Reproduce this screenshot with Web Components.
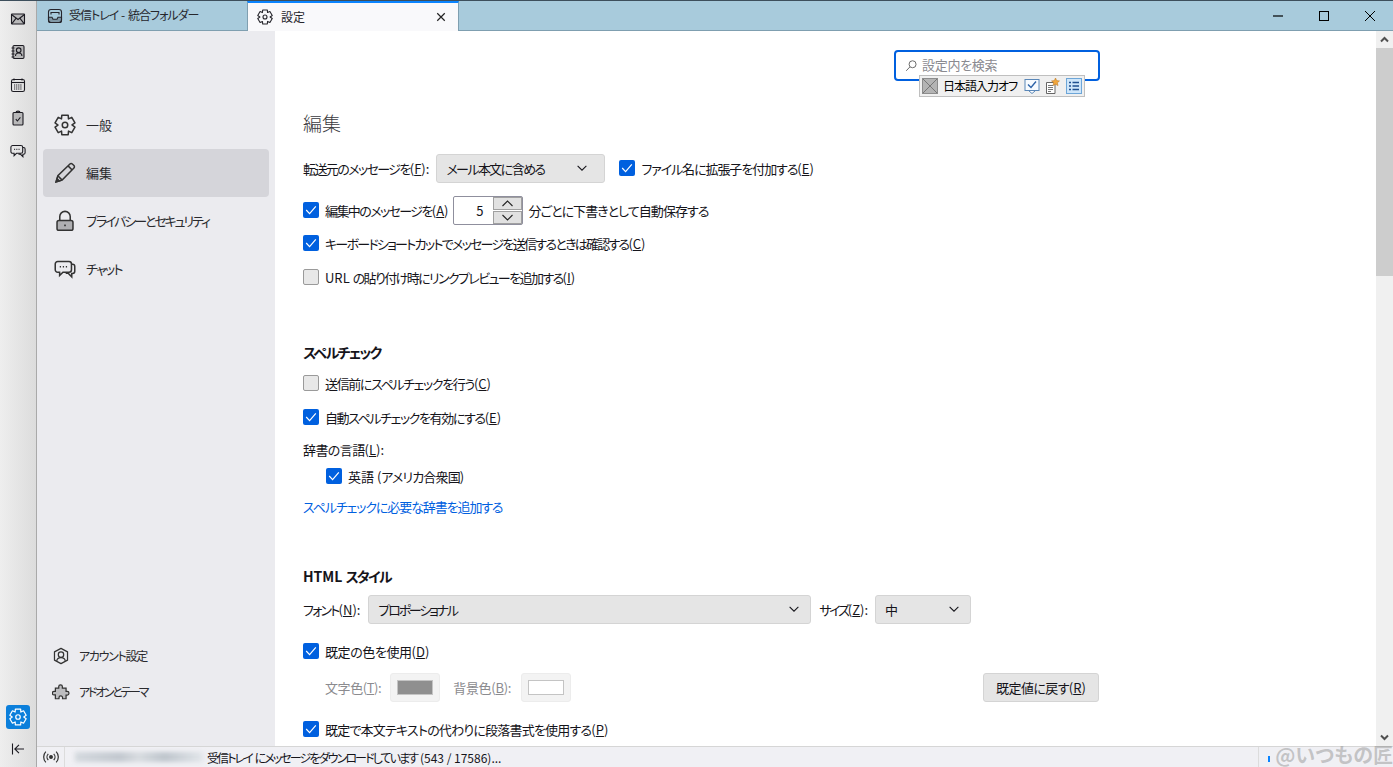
<!DOCTYPE html>
<html lang="ja">
<head>
<meta charset="utf-8">
<title>設定</title>
<style>
    html, body { margin: 0; height: 100%; overflow: hidden; }
    body {
        font-family: "Noto Sans CJK JP", "Noto Sans", sans-serif;
        font-size: 13px;
        color: #15141a;
        font-feature-settings: "palt";
    }
    .m3 { margin-top: 3px; } .m4 { margin-top: 4px; } .m5 { margin-top: 5px; } .m6 { margin-top: 6px; }
    .m12 { margin-top: 12px; } .m16 { margin-top: 16px; } .m26 { margin-top: 26px; }
    .m46 { margin-top: 46px; } .m48 { margin-top: 48px; } .m0 { margin-top: 0; }
    .indent { padding-left: 23px; }
    .push { margin-left: auto; }
    .dim { color: #8b8b8f; }
    /* latin parts keep normal spacing, only the kana is squeezed */
    .k { letter-spacing: 0; white-space: pre; }
    a { color: #0060df; text-decoration: none; }
</style>
</head>
<body>

<app-shell>
    <spaces-bar slot="spaces"></spaces-bar>

    <tab-bar slot="tabs">
        <tab-item icon="inbox" style="letter-spacing:-1px">受信トレイ<span class="k"> - </span>統合フォルダー</tab-item>
        <tab-item icon="gear" selected>設定</tab-item>
    </tab-bar>

    <pref-nav slot="nav">
        <nav-item icon="gear">一般</nav-item>
        <nav-item icon="pencil" selected>編集</nav-item>
        <nav-item icon="lock" style="letter-spacing:-2.1px">プライバシーとセキュリティ</nav-item>
        <nav-item icon="chat" style="letter-spacing:-1.7px">チャット</nav-item>
        <nav-item slot="footer" small icon="account" style="letter-spacing:-1.3px">アカウント設定</nav-item>
        <nav-item slot="footer" small icon="puzzle" style="letter-spacing:-2.3px">アドオンとテーマ</nav-item>
    </pref-nav>

    <pref-pane slot="pane">
        <search-box placeholder="設定内を検索"></search-box>

        <pref-title class="m26">編集</pref-title>

        <pref-row class="m16">
            <span style="letter-spacing:-1.6px">転送元のメッセージを<span class="k">(<u>F</u>):</span></span>
            <pref-select width="169" arrow-pad="15" style="margin-left:7px;letter-spacing:-1.6px">メール本文に含める</pref-select>
            <pref-check checked style="margin-left:14px;letter-spacing:-1.07px">ファイル名に拡張子を付加する<span class="k">(<u>E</u>)</span></pref-check>
        </pref-row>
        <pref-row class="m12">
            <pref-check checked style="letter-spacing:-1.6px">編集中のメッセージを<span class="k">(<u>A</u>)</span></pref-check>
            <number-box value="5" style="margin:0 5px 0 5px"></number-box>
            <span style="letter-spacing:-.95px">分ごとに下書きとして自動保存する</span>
        </pref-row>
        <pref-row class="m3"><pref-check checked style="letter-spacing:-1.73px">キーボードショートカットでメッセージを送信するときは確認する<span class="k">(<u>C</u>)</span></pref-check></pref-row>
        <pref-row class="m4"><pref-check style="letter-spacing:-1.6px"><span class="k">URL </span>の貼り付け時にリンクプレビューを追加する<span class="k">(<u>I</u>)</span></pref-check></pref-row>

        <pref-heading class="m48" style="letter-spacing:-1.7px">スペルチェック</pref-heading>
        <pref-row class="m4"><pref-check style="letter-spacing:-1.36px">送信前にスペルチェックを行う<span class="k">(<u>C</u>)</span></pref-check></pref-row>
        <pref-row class="m4"><pref-check checked style="letter-spacing:-1.4px">自動スペルチェックを有効にする<span class="k">(<u>E</u>)</span></pref-check></pref-row>
        <pref-row class="m5" style="height:24px"><span style="letter-spacing:-.6px">辞書の言語<span class="k">(<u>L</u>):</span></span></pref-row>
        <pref-row class="m0 indent"><pref-check checked style="letter-spacing:-.86px"><span class="k">英語 (</span>アメリカ合衆国<span class="k">)</span></pref-check></pref-row>
        <pref-row class="m3" style="height:24px"><a href="#" style="letter-spacing:-1.1px">スペルチェックに必要な辞書を追加する</a></pref-row>

        <pref-heading class="m46" style="letter-spacing:-1.75px"><span class="k">HTML </span>スタイル</pref-heading>
        <pref-row class="m6">
            <span style="letter-spacing:-1.75px">フォント<span class="k">(<u>N</u>):</span></span>
            <pref-select width="443" arrow-pad="9" style="margin-left:8px;letter-spacing:-2.2px">プロポーショナル</pref-select>
            <span style="margin-left:8px;letter-spacing:-2.3px">サイズ<span class="k">(<u>Z</u>):</span></span>
            <pref-select width="96" arrow-pad="9" style="margin-left:7px">中</pref-select>
        </pref-row>
        <pref-row class="m12"><pref-check checked style="letter-spacing:-.43px">既定の色を使用<span class="k">(<u>D</u>)</span></pref-check></pref-row>
        <pref-row class="m6">
            <span class="dim" style="margin-left:22px;letter-spacing:-.43px">文字色(<u>T</u>):</span>
            <color-swatch color="#8f8f8f" style="margin-left:9px"></color-swatch>
            <span class="dim" style="margin-left:13px;letter-spacing:-.3px">背景色(<u>B</u>):</span>
            <color-swatch color="#ffffff" style="margin-left:10px"></color-swatch>
            <pref-button class="push" style="letter-spacing:-.6px">既定値に戻す<span class="k">(<u>R</u>)</span></pref-button>
        </pref-row>
        <pref-row class="m12"><pref-check checked style="letter-spacing:-.8px">既定で本文テキストの代わりに段落書式を使用する<span class="k">(<u>P</u>)</span></pref-check></pref-row>
    </pref-pane>

    <status-bar slot="status">
        <span slot="status-text" style="letter-spacing:-1.9px">受信トレイ<span class="k"> </span>にメッセージをダウンロードしています<span class="k"> (543 / 17586)...</span></span>
    </status-bar>
</app-shell>

<script>
// builds a rounded gear outline, six lobes like the Thunderbird one
function gearPath() {
    const pts = [];
    for (let i = 0; i < 6; i++) {
        const a = (i * 60 - 90) * Math.PI / 180;
        const steps = [[-0.32, 7.4], [0.32, 7.4], [0.52, 5.1]];
        steps.forEach(([da, r]) => {
            pts.push([8 + r * Math.cos(a + da), 8 + r * Math.sin(a + da)]);
        });
    }
    return 'M' + pts.map(p => p[0].toFixed(2) + ' ' + p[1].toFixed(2)).join('L') + 'Z';
}

const ICONS = {
    gear: `<path d="${gearPath()}" stroke-linejoin="round"/><circle cx="8" cy="8" r="2"/>`,
    inbox: `<rect x="1.5" y="1.5" width="13" height="13" rx="2.5"/><path d="M4 6.5V4.5h8v2"/><path d="M1.5 9.2H5l1 2h4l1-2h3.5v3.3a2 2 0 0 1-2 2h-9a2 2 0 0 1-2-2z" fill="currentColor" fill-opacity=".3"/>`,
    mail: `<rect x="1.5" y="3" width="13" height="10" rx=".5" fill="currentColor" fill-opacity=".22"/><path d="M1.5 3.5 8 8.5l6.5-5M1.7 12.8 6.2 7.2M14.3 12.8 9.8 7.2"/>`,
    book: `<rect x="3" y="1.5" width="11" height="13" rx="1.2" fill="currentColor" fill-opacity=".22"/><path d="M1.5 4h3M1.5 7h3M1.5 10h3M1.5 13h3"/><circle cx="8.7" cy="6.2" r="2.3"/><path d="M5.5 12c0-4 6.4-4 6.4 0"/>`,
    calendar: `<rect x="1.5" y="2.5" width="13" height="12" rx="1.8"/><path d="M1.5 5.5h13"/><path d="M4 1.5v2M12 1.5v2"/><path d="M4 8h8M4 10h8M4 12h8" stroke-dasharray="1.2 .9"/>`,
    tasks: `<rect x="3" y="2.5" width="10" height="12.5" rx="1" fill="currentColor" fill-opacity=".22"/><path d="M6 2.5a2 1.4 0 0 1 4 0"/><path d="M5.8 9.2 7.4 11l3-3.6"/>`,
    chat: `<path d="M2.7 2.5h8.2a1.8 1.8 0 0 1 1.8 1.8v4.2a1.8 1.8 0 0 1-1.8 1.8H6.5l-2.4 2.4v-2.4H2.7A1.8 1.8 0 0 1 .9 8.5V4.3a1.8 1.8 0 0 1 1.8-1.8z"/><path d="M12.7 4.5h.8a1.6 1.6 0 0 1 1.6 1.6v3.6a1.6 1.6 0 0 1-1.6 1.6h-.6v2.4l-2.6-2.6H8.5"/><path d="M4.2 6.4h.9M6.4 6.4h.9M8.6 6.4h.9"/>`,
    pencil: `<path d="M1.5 14.5 2.8 10 11.6 1.4a1.2 1.2 0 0 1 1.7 0l1.2 1.2a1.2 1.2 0 0 1 0 1.7L5.9 13.2z"/><path d="M2.8 10 5.9 13.2M10.2 2.8l3 3"/><path d="M1.5 14.5l.7-2.4 1.7 1.7z" fill="currentColor"/>`,
    lock: `<rect x="2.2" y="7.6" width="11.6" height="7.2" rx="1.4" fill="currentColor" fill-opacity=".32"/><path d="M4.2 7.6V4.8a3.8 3.8 0 0 1 7.6 0v2.8"/><rect x="7.4" y="10.6" width="1.2" height="1.2" fill="currentColor" stroke="none"/>`,
    account: `<path d="M8 1.2 13.8 4.3v7.4L8 14.8 2.2 11.7V4.3z" stroke-linejoin="round"/><circle cx="8" cy="6.8" r="2.4"/><path d="M4.2 12.4c.5-4 7.1-4 7.6 0"/>`,
    puzzle: `<path d="M6 3.2a1.6 1.6 0 0 1 3.2 0v1.3h3.3v3h1a1.6 1.6 0 0 1 0 3.2h-1V14H9.4v-1a1.6 1.6 0 0 0-3.2 0v1H3v-3.4H1.9a1.6 1.6 0 0 1 0-3.2H3V4.5h3z" fill="currentColor" fill-opacity=".25"/>`,
    collapse: `<path d="M2.5 2.5v11M14 8H5M9 3.8 4.8 8 9 12.2"/>`,
    antenna: `<circle cx="8" cy="8" r="1.2" fill="currentColor"/><path d="M5.6 5.2a4 4 0 0 0 0 5.6M10.4 5.2a4 4 0 0 1 0 5.6M3.4 3.2a7 7 0 0 0 0 9.6M12.6 3.2a7 7 0 0 1 0 9.6"/>`,
    search: `<circle cx="9.8" cy="6" r="4"/><path d="M6.8 9 2.5 13.5"/>`,
    close: `<path d="M3 3l10 10M13 3 3 13" stroke-width="1.6"/>`,
    chevron: `<path d="M3 5.5 8 10.5l5-5" stroke-width="1.2"/>`
};

class AppIcon extends HTMLElement {
    connectedCallback() {
        const size = this.getAttribute('size') || 16;
        const name = this.getAttribute('name');
        if (!this.shadowRoot) this.attachShadow({ mode: 'open' });
        this.shadowRoot.innerHTML = `
            <style>
                :host { display: inline-flex; flex: none; width: ${size}px; height: ${size}px; color: inherit; }
                svg { width: 100%; height: 100%; fill: none; stroke: currentColor; stroke-width: 1.1; display: block; }
            </style>
            <svg viewBox="0 0 16 16" aria-hidden="true">${ICONS[name] || ''}</svg>
        `;
    }
}

class AppShell extends HTMLElement {
    constructor() {
        super();
        this.attachShadow({ mode: 'open' }).innerHTML = `
            <style>
                :host {
                    display: grid;
                    grid-template-columns: 37px 1fr;
                    grid-template-rows: 30px 1fr 21px;
                    height: 767px;
                    box-sizing: border-box;
                    border-top: 1px solid #3d4f5c;
                }
                .sp { grid-row: 1 / 4; display: grid; min-height: 0; }
                .tabs { grid-column: 2; display: grid; }
                .mid { grid-column: 2; display: flex; min-height: 0; }
                .st { grid-column: 2; display: grid; }
            </style>
            <div class="sp"><slot name="spaces"></slot></div>
            <div class="tabs"><slot name="tabs"></slot></div>
            <div class="mid"><slot name="nav"></slot><slot name="pane"></slot></div>
            <div class="st"><slot name="status"></slot></div>
        `;
    }
}

class SpacesBar extends HTMLElement {
    constructor() {
        super();
        const top = ['mail', 'book', 'calendar', 'tasks', 'chat']
            .map(n => `<div class="btn"><app-icon name="${n}"></app-icon></div>`).join('');
        this.attachShadow({ mode: 'open' }).innerHTML = `
            <style>
                :host {
                    display: flex;
                    flex-direction: column;
                    align-items: center;
                    box-sizing: border-box;
                    padding: 1px 1px 1px 0;
                    background: linear-gradient(90deg, #eeeeee, #dcdcdc);
                    border-right: 1px solid #a9a9a9;
                    color: #1c1b22;
                }
                .btn { width: 24px; height: 33px; display: flex; align-items: center; justify-content: center; flex: none; }
                .gap { flex: 1; }
                .active { height: 24px; background: #0b7fdb; border-radius: 3px; color: #fff; margin-bottom: 8px; }
                .low { height: 24px; margin-bottom: 5px; }
            </style>
            ${top}
            <div class="gap"></div>
            <div class="btn active"><app-icon name="gear" size="18"></app-icon></div>
            <div class="btn low"><app-icon name="collapse"></app-icon></div>
        `;
    }
}

class TabBar extends HTMLElement {
    constructor() {
        super();
        this.attachShadow({ mode: 'open' }).innerHTML = `
            <style>
                :host { display: flex; background: #a8cbdc; height: 30px; box-sizing: border-box; border-bottom: 1px solid #7f9fb0; }
                .win { margin-left: auto; display: flex; align-items: center; color: #000; }
                .win div { width: 46px; height: 29px; display: flex; align-items: center; justify-content: center; }
                svg { width: 12px; height: 12px; fill: none; stroke: currentColor; stroke-width: 1; }
            </style>
            <slot></slot>
            <div class="win">
                <div><svg viewBox="0 0 12 12"><path d="M1 6h10" stroke-width="1.2"/></svg></div>
                <div><svg viewBox="0 0 12 12"><rect x="1.5" y="1.5" width="9" height="9"/></svg></div>
                <div><svg viewBox="0 0 12 12"><path d="M1 1l10 10M11 1 1 11"/></svg></div>
            </div>
        `;
    }
}

class TabItem extends HTMLElement {
    connectedCallback() {
        const icon = this.getAttribute('icon');
        const selected = this.hasAttribute('selected');
        if (!this.shadowRoot) this.attachShadow({ mode: 'open' });
        this.shadowRoot.innerHTML = `
            <style>
                :host {
                    display: flex; align-items: center; box-sizing: border-box;
                    width: ${selected ? 212 : 210}px;
                    height: ${selected ? 30 : 29}px;
                    padding-left: ${selected ? 9 : 10}px;
                    font-size: 12px;
                    color: #26262c;
                    ${selected ? 'background:#f9f9fb; border-top:2px solid #0a84ff; border-left:1px solid #7f9fb0; border-right:1px solid #7f9fb0;' : ''}
                }
                app-icon { margin-right: ${selected ? 8 : 6}px; }
                .x { margin-left: auto; margin-right: 11px; color: #222; }
                .t { padding-bottom: 2px; }
            </style>
            <app-icon name="${icon}"></app-icon>
            <span class="t"><slot></slot></span>
            ${selected ? '<app-icon class="x" name="close" size="12"></app-icon>' : ''}
        `;
    }
}

class PrefNav extends HTMLElement {
    constructor() {
        super();
        this.attachShadow({ mode: 'open' }).innerHTML = `
            <style>
                :host {
                    display: flex; flex-direction: column; flex: none; box-sizing: border-box;
                    width: 238px; padding: 70px 6px 36px; background: #ebebef;
                }
                .foot { margin-top: auto; display: flex; flex-direction: column; }
            </style>
            <slot></slot>
            <div class="foot"><slot name="footer"></slot></div>
        `;
    }
}

class NavItem extends HTMLElement {
    connectedCallback() {
        const small = this.hasAttribute('small');
        const selected = this.hasAttribute('selected');
        if (!this.shadowRoot) this.attachShadow({ mode: 'open' });
        this.shadowRoot.innerHTML = `
            <style>
                :host {
                    display: flex; align-items: center; box-sizing: border-box;
                    height: ${small ? 36 : 48}px;
                    padding-left: ${small ? 9 : 11}px;
                    border-radius: 4px;
                    font-size: ${small ? 12 : 13}px;
                    color: #2a2a2e;
                    ${selected ? 'background:#d5d5da;' : ''}
                }
                app-icon { margin-right: ${small ? 9 : 10}px; color: #333; }
                .t { padding-bottom: 2px; }
            </style>
            <app-icon name="${this.getAttribute('icon')}" size="${small ? 18 : 22}"></app-icon>
            <span class="t"><slot></slot></span>
        `;
    }
}

class PrefPane extends HTMLElement {
    constructor() {
        super();
        this.attachShadow({ mode: 'open' }).innerHTML = `
            <style>
                :host { display: flex; flex: 1; min-width: 0; background: #fff; overflow: hidden; }
                .scroll { flex: 1; min-width: 0; overflow: hidden; padding: 19px 0 0 28px; }
                .col { width: 796px; display: flex; flex-direction: column; }
                .bar { flex: none; width: 17px; display: flex; flex-direction: column; background: #f0f0f0; }
                .arrow { height: 17px; flex: none; display: flex; align-items: center; justify-content: center; color: #505050; }
                .arrow svg { width: 9px; height: 9px; fill: none; stroke: currentColor; stroke-width: 2; }
                .thumb { height: 228px; background: #cdcdcd; }
                .track { flex: 1; }
            </style>
            <div class="scroll"><div class="col"><slot></slot></div></div>
            <div class="bar">
                <div class="arrow"><svg viewBox="0 0 9 9"><path d="M1 6.5 4.5 3 8 6.5"/></svg></div>
                <div class="thumb"></div>
                <div class="track"></div>
                <div class="arrow"><svg viewBox="0 0 9 9"><path d="M1 2.5 4.5 6 8 2.5"/></svg></div>
            </div>
        `;
    }
}

class SearchBox extends HTMLElement {
    connectedCallback() {
        if (!this.shadowRoot) this.attachShadow({ mode: 'open' });
        this.shadowRoot.innerHTML = `
            <style>
                :host {
                    display: flex; align-items: center; box-sizing: border-box; position: relative;
                    align-self: flex-end;
                    width: 206px; height: 31px; margin-right: -1px;
                    border: 2px solid #0060df; border-radius: 4px; background: #fff;
                    padding-left: 8px; color: #8a8a90; font-size: 13px; letter-spacing: -.3px;
                }
                app-icon { margin-right: 4px; color: #666; }
                .ph { padding-bottom: 2px; }
                .ime {
                    position: absolute; left: 23px; top: 23px; width: 166px; height: 22px; box-sizing: border-box;
                    display: flex; align-items: center; padding: 0 2px;
                    background: #f0f0f0; border: 1px solid #bfbfbf; color: #000; font-size: 12px;
                }
                .ime span { white-space: nowrap; letter-spacing: -1px; margin: 0 4px 0 5px; flex: none; width: 77px; padding-bottom: 2px; }
                .ime svg { width: 16px; height: 16px; flex: none; display: block; }
            </style>
            <app-icon name="search" size="14"></app-icon>
            <span class="ph">${this.getAttribute('placeholder') || ''}</span>
            <div class="ime">
                <svg viewBox="0 0 16 16"><rect x=".5" y=".5" width="15" height="15" fill="#b4b4b4" stroke="#8c8c8c"/><path d="M1 1l14 14M15 1 1 15" stroke="#777" fill="none"/></svg>
                <span>日本語入力オフ</span>
                <svg viewBox="0 0 16 16"><rect x="1" y="1.5" width="14" height="11" fill="#f7fbff" stroke="#5a87b8"/><path d="M5 13l3 2.5 3-2.5" fill="#fff" stroke="#5a87b8"/><path d="M4 6.5 7 9.5l5-6" fill="none" stroke="#2c62a8" stroke-width="1.4"/></svg>
                <svg viewBox="0 0 16 16" style="margin-left:4px"><path d="M2.5 4.5h8.5v11h-8.5z" fill="#fff" stroke="#666"/><path d="M4 7.5h5M4 9.5h5M4 11.5h5M4 13.5h3" stroke="#777" fill="none"/><path d="M11.5 0l1.2 2.6 2.8.3-2.1 1.9.6 2.8-2.5-1.4-2.5 1.4.6-2.8-2.1-1.9 2.8-.3z" fill="#f2a63b" stroke="#b5701a" stroke-width=".5"/></svg>
                <svg viewBox="0 0 16 16" style="margin-left:6px"><rect x=".5" y=".5" width="15" height="15" fill="#cfe6fa" stroke="#6da6d8"/><path d="M3 4.5h2M3 8h2M3 11.5h2M6.5 4.5h6.5M6.5 8h6.5M6.5 11.5h6.5" stroke="#1f4f8f" stroke-width="1.4" fill="none"/></svg>
            </div>
        `;
    }
}

class PrefTitle extends HTMLElement {
    constructor() {
        super();
        this.attachShadow({ mode: 'open' }).innerHTML = `
            <style>:host { display: flex; align-items: center; height: 30px; font-size: 19px; font-weight: 300; color: #3a3a40; }</style>
            <slot></slot>
        `;
    }
}

class PrefHeading extends HTMLElement {
    constructor() {
        super();
        this.attachShadow({ mode: 'open' }).innerHTML = `
            <style>:host { display: flex; align-items: center; height: 24px; font-size: 14px; font-weight: 700; color: #15141a; }</style>
            <span><slot></slot></span>
        `;
    }
}

class PrefRow extends HTMLElement {
    constructor() {
        super();
        this.attachShadow({ mode: 'open' }).innerHTML = `
            <style>:host { display: flex; align-items: center; height: 30px; }</style>
            <slot></slot>
        `;
    }
}

class PrefCheck extends HTMLElement {
    connectedCallback() {
        const on = this.hasAttribute('checked');
        if (!this.shadowRoot) this.attachShadow({ mode: 'open' });
        this.shadowRoot.innerHTML = `
            <style>
                :host { display: inline-flex; align-items: center; gap: 6px; }
                .box {
                    width: 16px; height: 16px; box-sizing: border-box; border-radius: 2px; flex: none;
                    ${on ? 'background:#0060df;' : 'background:#e8e8e8; border:1px solid #9a9a9a;'}
                }
                svg { display: block; width: 16px; height: 16px; fill: none; stroke: #fff; stroke-width: 1.2; }
            </style>
            <div class="box">${on ? '<svg viewBox="0 0 16 16"><path d="M3.2 8 6.6 11.6 12.8 4.4"/></svg>' : ''}</div>
            <span><slot></slot></span>
        `;
    }
}

class PrefSelect extends HTMLElement {
    connectedCallback() {
        if (!this.shadowRoot) this.attachShadow({ mode: 'open' });
        this.shadowRoot.innerHTML = `
            <style>
                :host {
                    display: flex; align-items: center; box-sizing: border-box; flex: none;
                    width: ${this.getAttribute('width')}px; height: 29px;
                    padding: 0 ${this.getAttribute('arrow-pad') || 15}px 0 9px;
                    background: #e5e5e5; border: 1px solid #d4d4d4; border-radius: 3px;
                }
                span { flex: 1; }
            </style>
            <span><slot></slot></span>
            <app-icon name="chevron" size="14"></app-icon>
        `;
    }
}

class NumberBox extends HTMLElement {
    connectedCallback() {
        if (!this.shadowRoot) this.attachShadow({ mode: 'open' });
        this.shadowRoot.innerHTML = `
            <style>
                :host {
                    display: flex; box-sizing: border-box; flex: none; width: 70px; height: 29px;
                    border: 1px solid #8f8f9d; border-radius: 2px; background: #fff;
                }
                .val { flex: 1; display: flex; align-items: center; justify-content: flex-end; padding-right: 10px; }
                .spin { width: 29px; display: flex; flex-direction: column; gap: 1px; }
                .spin div { flex: 1; background: #e1e1e1; border: 1px solid #a0a0a0; box-sizing: border-box; display: flex; align-items: center; justify-content: center; }
                svg { width: 13px; height: 9px; fill: none; stroke: #222; stroke-width: 1.1; }
            </style>
            <div class="val">${this.getAttribute('value')}</div>
            <div class="spin">
                <div><svg viewBox="0 0 13 9"><path d="M1.5 7 6.5 2l5 5"/></svg></div>
                <div><svg viewBox="0 0 13 9"><path d="M1.5 2l5 5 5-5"/></svg></div>
            </div>
        `;
    }
}

class ColorSwatch extends HTMLElement {
    connectedCallback() {
        if (!this.shadowRoot) this.attachShadow({ mode: 'open' });
        this.shadowRoot.innerHTML = `
            <style>
                :host {
                    display: flex; align-items: center; justify-content: center; box-sizing: border-box; flex: none;
                    width: 50px; height: 29px; background: #f3f3f3; border: 1px solid #ececec; border-radius: 3px;
                }
                i { display: block; width: 36px; height: 15px; box-sizing: border-box; border: 1px solid #c4c4c4; background: ${this.getAttribute('color')}; }
            </style>
            <i></i>
        `;
    }
}

class PrefButton extends HTMLElement {
    constructor() {
        super();
        this.attachShadow({ mode: 'open' }).innerHTML = `
            <style>
                :host {
                    display: flex; align-items: center; justify-content: center; box-sizing: border-box; flex: none;
                    width: 116px; height: 29px; background: #e5e5e5; border: 1px solid #d4d4d4; border-radius: 3px;
                }
            </style>
            <span><slot></slot></span>
        `;
    }
}

class StatusBar extends HTMLElement {
    constructor() {
        super();
        this.attachShadow({ mode: 'open' }).innerHTML = `
            <style>
                :host {
                    display: flex; align-items: center; position: relative; box-sizing: border-box;
                    background: #f0f0f4; border-top: 1px solid #d6d6d6; height: 21px; font-size: 12px; color: #15141a;
                }
                .ant { width: 28px; height: 100%; display: flex; align-items: center; justify-content: center; border-right: 1px solid #dcdcdc; box-sizing: border-box; flex: none; color: #333; }
                .blur { width: 128px; height: 10px; margin: 0 4px 0 10px; background: linear-gradient(90deg, #d4d9de, #c2c8cf 35%, #d8dce0 50%, #bec5cc 70%, #e2e6ea); filter: blur(2px); flex: none; }
                .sep { position: absolute; left: 1221px; top: 0; bottom: 0; border-left: 1px solid #dcdcdc; }
                .dot { position: absolute; left: 1231px; top: 9px; width: 2px; height: 6px; background: #0a84ff; }
                .mark {
                    position: absolute; right: 0; top: -5px; font-size: 20px; font-weight: 700; color: rgba(120, 120, 120, .38);
                    white-space: nowrap; line-height: 26px;
                }
            </style>
            <div class="ant"><app-icon name="antenna" size="18"></app-icon></div>
            <div class="blur"></div>
            <slot name="status-text"></slot>
            <div class="sep"></div>
            <div class="dot"></div>
            <div class="mark">@いつもの匠</div>
        `;
    }
}

customElements.define('app-icon', AppIcon);
customElements.define('app-shell', AppShell);
customElements.define('spaces-bar', SpacesBar);
customElements.define('tab-bar', TabBar);
customElements.define('tab-item', TabItem);
customElements.define('pref-nav', PrefNav);
customElements.define('nav-item', NavItem);
customElements.define('pref-pane', PrefPane);
customElements.define('search-box', SearchBox);
customElements.define('pref-title', PrefTitle);
customElements.define('pref-heading', PrefHeading);
customElements.define('pref-row', PrefRow);
customElements.define('pref-check', PrefCheck);
customElements.define('pref-select', PrefSelect);
customElements.define('number-box', NumberBox);
customElements.define('color-swatch', ColorSwatch);
customElements.define('pref-button', PrefButton);
customElements.define('status-bar', StatusBar);
</script>
</body>
</html>
